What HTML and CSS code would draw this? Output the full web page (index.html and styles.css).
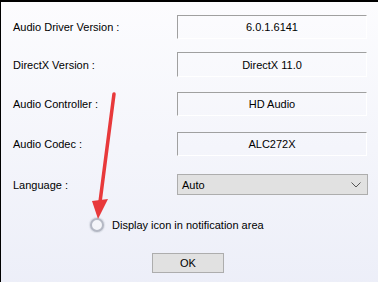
FILE: index.html
```html
<!DOCTYPE html>
<html lang="en">

<head>
    <meta charset="UTF-8">
    <meta name="viewport" content="width=device-width, initial-scale=1.0">
    <title>Audio Info</title>
    <link rel="stylesheet" href="styles.css">
</head>

<body>
    <div class="dialog">
        <div class="row r1">
            <span class="label">Audio Driver Version :</span>
            <div class="field">6.0.1.6141</div>
        </div>
        <div class="row r2">
            <span class="label">DirectX Version :</span>
            <div class="field">DirectX 11.0</div>
        </div>
        <div class="row r3">
            <span class="label">Audio Controller :</span>
            <div class="field">HD Audio</div>
        </div>
        <div class="row r4">
            <span class="label">Audio Codec :</span>
            <div class="field">ALC272X</div>
        </div>
        <div class="row r5">
            <span class="label">Language :</span>
            <div class="select">
                <span>Auto</span>
                <svg class="chev" width="10" height="6" viewBox="0 0 10 6"><path d="M0.5 0.5 L5 5 L9.5 0.5" fill="none" stroke="#555" stroke-width="1"/></svg>
            </div>
        </div>
        <div class="check">
            <span class="radio"></span>
            <span>Display icon in notification area</span>
        </div>
        <div class="buttons">
            <div class="btn">OK</div>
        </div>

        <svg class="arrow" width="378" height="282" viewBox="0 0 378 282">
            <line x1="114" y1="94" x2="100" y2="202" stroke="#e8393b" stroke-width="3.5" stroke-linecap="round"/>
            <polygon points="92,201 108,199 98,219" fill="#e8393b"/>
        </svg>
    </div>
</body>

</html>
```

FILE: styles.css
```css
html,
body,
div {
    margin: 0;
    padding: 0;
}

body {
    font-family: "Liberation Sans", Arial, sans-serif;
    font-size: 11px;
    color: #000;
}

.dialog {
    position: relative;
    width: 377px;
    height: 280px;
    border-top: 2px solid #000;
    border-left: 1px solid #000;
    background: linear-gradient(#fcfcfe, #eceef8);
    padding-top: 13px;
    box-sizing: content-box;
}

.row {
    display: flex;
    align-items: center;
}
.label {
    width: 164px;
    padding-left: 12px;
}
.field {
    width: 188px;
    height: 22px;
    line-height: 23px;
    text-align: center;
    border-top: 1px solid #a0a0a0;
    border-left: 1px solid #a0a0a0;
    border-right: 1px solid #fff;
    border-bottom: 1px solid #fff;
}
.r2 {margin-top: 13px;}
.r2 .field {height: 23px;line-height: 24px;}
.r3 {margin-top: 15px;}
.r4 {margin-top: 16px;}
.r5 {margin-top: 18px;}

.select {
    width: 185px;
    height: 19px;
    border: 1px solid #adadad;
    background: #e1e1e1;
    display: flex;
    align-items: center;
    justify-content: space-between;
    padding-left: 4px;
    box-sizing: content-box;
}
.chev {margin-right: 6px;}

.check {
    display: flex;
    align-items: center;
    margin-top: 22px;
    padding-left: 89px;
    height: 16px;
}
.radio {
    width: 10px;
    height: 10px;
    border: 2px solid #b4b8c4;
    border-radius: 50%;
    background: #f4f5f9;
    margin-right: 8px;
    box-shadow: 0 0 1px 1px #dadde6;
}

.buttons {
    display: flex;
    margin-top: 20px;
    padding-left: 151px;
}
.btn {
    width: 70px;
    height: 18px;
    line-height: 19px;
    text-align: center;
    border: 1px solid #adadad;
    background: #e1e1e1;
}

.arrow {
    position: absolute;
    top: -2px;
    left: -1px;
}
```
